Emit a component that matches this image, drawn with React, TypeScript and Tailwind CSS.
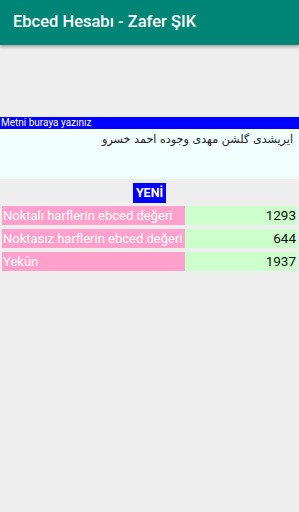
import React from "react";

export default function App() {
  return (
    <div className="w-[299px] h-[512px] bg-[#eeeeee] flex flex-col" style={{ fontFamily: "Roboto, 'Noto Sans', sans-serif" }}>
      <div className="h-[45px] bg-[#008577] flex items-center pl-[13px] shadow-[0_2px_3px_rgba(0,0,0,0.3)] z-10">
        <span className="text-white text-[16.5px] font-medium">Ebced Hesabı - Zafer ŞIK</span>
      </div>
      <div className="h-[72px]" />
      <div className="h-[12px] bg-[#0000ff] text-white text-[10px] leading-[12px] pl-[1px]">Metni buraya yazınız</div>
      <div className="h-[50px] bg-[#f0fffe] pr-[6px] pt-[2px] text-[11.2px] leading-[18px] text-[#222]" style={{ fontFamily: "'DejaVu Sans', 'Noto Sans', sans-serif" }}>
        <div className="text-right" dir="rtl">ایریشدی گلشن مهدی وجوده احمد خسرو</div>
      </div>
      <div className="flex justify-center pt-[4px]">
        <div className="bg-[#0000ff] text-white text-[12.5px] font-bold w-[33px] h-[20px] flex items-center justify-center">YENİ</div>
      </div>
      <div className="flex flex-col gap-[4px] px-[2px] pt-[3px]">
        {[
          ["Noktalı harflerin ebced değeri", "1293"],
          ["Noktasız harflerin ebced değeri", "644"],
          ["Yekûn", "1937"],
        ].map(([l, v]) => (
          <div key={l} className="flex h-[19px] w-[295px]">
            <div className="w-[183px] bg-[#ff9fcb] text-white text-[13px] leading-[19px] pl-[1px] whitespace-nowrap overflow-hidden">{l}</div>
            <div className="flex-1 bg-[#ccffcc] text-[#111] text-[13.5px] leading-[19px] text-right pr-[1px]">{v}</div>
          </div>
        ))}
      </div>
    </div>
  );
}
